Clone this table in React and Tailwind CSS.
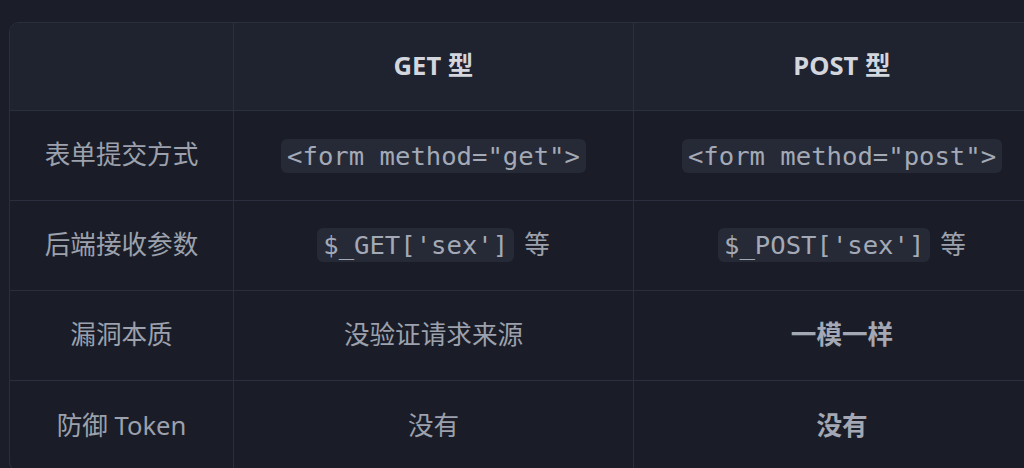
import React from "react";

const rows = [
  {
    label: "表单提交方式",
    get: { code: '<form method="get">' },
    post: { code: '<form method="post">' },
  },
  {
    label: "后端接收参数",
    get: { code: "$_GET['sex']", suffix: "等" },
    post: { code: "$_POST['sex']", suffix: "等" },
  },
  {
    label: "漏洞本质",
    get: { text: "没验证请求来源" },
    post: { text: "一模一样", bold: true },
  },
  {
    label: "防御 Token",
    get: { text: "没有" },
    post: { text: "没有", bold: true },
  },
];

function Cell({ value }) {
  if (value.code) {
    return (
      <span className="flex items-center gap-[10px]">
        <code className="rounded-md bg-[#262a37] px-[6px] py-[2px] leading-[30px] text-[25.6px] text-[#a4a9b6] font-['DejaVu_Sans_Mono','Liberation_Mono',monospace]">
          {value.code}
        </code>
        {value.suffix && <span>{value.suffix}</span>}
      </span>
    );
  }
  return (
    <span className={value.bold ? "font-bold text-[#a3a8b4]" : ""}>
      {value.text}
    </span>
  );
}

export default function App() {
  return (
    <div className="h-[468px] w-[1024px] overflow-hidden bg-[#1b1e28] pl-[9px] pt-[22px] font-['Noto_Sans','Noto_Sans_CJK_SC',sans-serif] text-[25.6px] text-[#9ca1ad]">
      <div className="w-[1042px] overflow-hidden rounded-[10px] border border-[#2b2f3d] bg-[#1a1d27]">
        {/* header */}
        <div className="flex h-[88px] border-b border-[#2b2f3d] bg-[#1f2330] font-bold text-[#d3d6dd]">
          <div className="w-[224px] border-r border-[#2b2f3d]" />
          <div className="flex w-[400px] items-center justify-center border-r border-[#2b2f3d]">
            GET 型
          </div>
          <div className="flex w-[416px] items-center justify-center">
            POST 型
          </div>
        </div>

        {rows.map((row, i) => (
          <div
            key={row.label}
            className={`flex h-[90px] ${i < rows.length - 1 ? "border-b border-[#2b2f3d]" : ""}`}
          >
            <div className="flex w-[224px] items-center justify-center border-r border-[#2b2f3d]">
              {row.label}
            </div>
            <div className="flex w-[400px] items-center justify-center border-r border-[#2b2f3d]">
              <Cell value={row.get} />
            </div>
            <div className="flex w-[416px] items-center justify-center">
              <Cell value={row.post} />
            </div>
          </div>
        ))}
      </div>
    </div>
  );
}
